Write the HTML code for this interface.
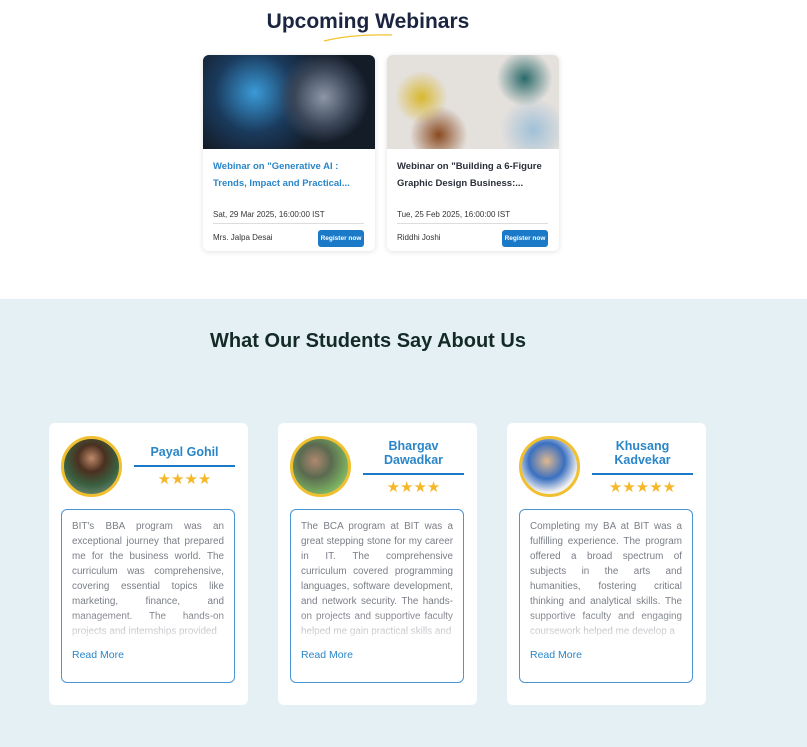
<!DOCTYPE html>
<html><head><style>
*{margin:0;padding:0;box-sizing:border-box}
body{width:807px;height:747px;overflow:hidden;background:#fff;font-family:"Liberation Sans",sans-serif;position:relative}
.h1{position:absolute;top:10px;left:0;width:736px;text-align:center;font-size:21px;font-weight:bold;color:#1b2540}
.w{position:absolute;top:55px;width:172px;height:196px;background:#fff;border-radius:6px;box-shadow:0 1px 6px rgba(0,0,0,.12);overflow:hidden}
.w .img{height:94px}
.w .t{position:absolute;left:10px;top:103px;width:155px;font-size:9.5px;font-weight:bold;line-height:17px;color:#2b2f3a}
.w .d{position:absolute;left:10px;top:155px;font-size:8px;color:#333}
.w .ln{position:absolute;left:10px;right:11px;top:168px;border-top:1px solid #ddd}
.w .n{position:absolute;left:10px;top:178px;font-size:8px;color:#333}
.w .b{position:absolute;right:11px;top:175px;width:46px;height:17px;background:#1a7ac8;color:#fff;font-size:6.5px;font-weight:bold;border-radius:3px;text-align:center;line-height:17px}
.sec{position:absolute;top:299px;left:0;width:807px;height:448px;background:#e4f0f4}
.h2{position:absolute;top:330px;left:0;width:736px;text-align:center;font-size:20px;font-weight:bold;color:#132a26}
.c{position:absolute;top:423px;width:199px;height:282px;background:#fff;border-radius:6px}
.av{position:absolute;left:12px;top:13px;width:61px;height:61px;border-radius:50%;border:3px solid #f0c030}
.nm{position:absolute;left:85px;width:101px;text-align:center;color:#2a86c8;font-size:12.5px;font-weight:bold;line-height:14px;border-bottom:2px solid #1a7ac8}
.st{position:absolute;left:85px;width:101px;text-align:center;color:#f5b82a;font-size:15px;letter-spacing:0px;line-height:15px}
.bx{position:absolute;left:12px;top:86px;width:174px;height:174px;border:1.5px solid #4a96d6;border-radius:6px;padding:9px 10px}
.tx{font-size:9.9px;line-height:15px;color:#7a7e86;text-align:justify;height:118px;overflow:hidden;-webkit-mask-image:linear-gradient(#000 80%,rgba(0,0,0,.2))}
.rm{position:absolute;left:10px;top:139px;color:#2a86c8;font-size:10.5px}
</style></head><body>
<div class="h1">Upcoming Webinars</div>
<svg style="position:absolute;left:322px;top:33px" width="72" height="10"><path d="M2 8 Q30 1 70 2" stroke="#f2c230" stroke-width="1.3" fill="none"/></svg>
<div class="w" style="left:203px"><div class="img" style="background:radial-gradient(circle at 70% 45%,#8c96a6 0,#3a4658 22%,transparent 35%),radial-gradient(circle at 30% 40%,#3a9ad8 0,#1a3a5c 30%,transparent 55%),#141c28"></div>
<div class="t" style="color:#2a86c8">Webinar on "Generative AI : Trends, Impact and Practical...</div><div class="d">Sat, 29 Mar 2025, 16:00:00 IST</div><div class="ln"></div><div class="n">Mrs. Jalpa Desai</div><div class="b">Register now</div></div>
<div class="w" style="left:387px"><div class="img" style="background:radial-gradient(circle at 20% 45%,#d8b830 0,transparent 18%),radial-gradient(circle at 30% 85%,#8a4a20 0,transparent 20%),radial-gradient(circle at 80% 25%,#2a6a6a 0,transparent 18%),radial-gradient(circle at 85% 80%,#a0c0d8 0,transparent 20%),#e4e0dc"></div>
<div class="t">Webinar on "Building a 6-Figure Graphic Design Business:...</div><div class="d">Tue, 25 Feb 2025, 16:00:00 IST</div><div class="ln"></div><div class="n">Riddhi Joshi</div><div class="b">Register now</div></div>
<div class="sec"></div>
<div class="h2">What Our Students Say About Us</div>
<div class="c" style="left:49px"><div class="av" style="background:radial-gradient(circle at 50% 35%,#c08a6a 0,#4a3020 30%,#3a6040 60%,#8aa090 100%)"></div>
<div class="nm" style="top:22px;padding-bottom:6px">Payal Gohil</div><div class="st" style="top:49px">★★★★</div>
<div class="bx"><div class="tx">BIT's BBA program was an exceptional journey that prepared me for the business world. The curriculum was comprehensive, covering essential topics like marketing, finance, and management. The hands-on projects and internships provided</div><div class="rm">Read More</div></div></div>
<div class="c" style="left:278px"><div class="av" style="background:radial-gradient(circle at 40% 40%,#b08870 0,#5a6a50 35%,#7ab060 70%,#c8d8b0 100%)"></div>
<div class="nm" style="top:16px;padding-bottom:6px">Bhargav Dawadkar</div><div class="st" style="top:57px">★★★★</div>
<div class="bx"><div class="tx">The BCA program at BIT was a great stepping stone for my career in IT. The comprehensive curriculum covered programming languages, software development, and network security. The hands-on projects and supportive faculty helped me gain practical skills and</div><div class="rm">Read More</div></div></div>
<div class="c" style="left:507px"><div class="av" style="background:radial-gradient(circle at 45% 40%,#e0b890 0,#3a70c0 40%,#f0f0f0 70%,#fff 100%)"></div>
<div class="nm" style="top:16px;padding-bottom:6px">Khusang Kadvekar</div><div class="st" style="top:57px">★★★★★</div>
<div class="bx"><div class="tx">Completing my BA at BIT was a fulfilling experience. The program offered a broad spectrum of subjects in the arts and humanities, fostering critical thinking and analytical skills. The supportive faculty and engaging coursework helped me develop a</div><div class="rm">Read More</div></div></div>
</body></html>
